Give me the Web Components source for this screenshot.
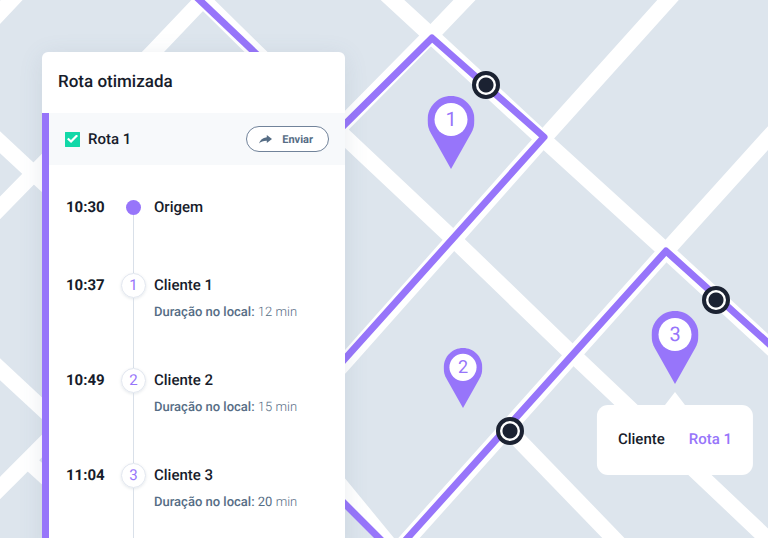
<!DOCTYPE html>
<html lang="pt-BR">
<head>
<meta charset="utf-8">
<meta name="viewport" content="width=device-width, initial-scale=1">
<title>Rota otimizada</title>
<style>
	body {
		margin: 0;
		font-family: Roboto, "Liberation Sans", sans-serif;
		text-rendering: geometricPrecision;
		color: #171c2b;
		--accent: #9775fa;
		--land: #dde5ed;
		--ink: #1b2232;
		--slate: #566d85;
		--line: #e1e6ef;
	}
</style>
</head>
<body>
<route-map>
	<map-stop style="left: 486px; top: 85px"></map-stop>
	<map-stop style="left: 510px; top: 431px"></map-stop>
	<map-stop style="left: 716px; top: 300px"></map-stop>
	<map-pin style="left: 451px; top: 169px">1</map-pin>
	<map-pin small style="left: 463px; top: 408px">2</map-pin>
	<map-pin style="left: 675px; top: 384px">3</map-pin>
	<map-tooltip style="left: 675px; top: 392px">Cliente<a slot="route" href="#rota-1">Rota 1</a></map-tooltip>
	<route-panel slot="panel">
		<span slot="title">Rota otimizada</span>
		<route-header slot="route">Rota 1</route-header>
		<route-step time="10:30" origin>Origem</route-step>
		<route-step time="10:37" number="1" duration="12">Cliente 1</route-step>
		<route-step time="10:49" number="2" duration="15">Cliente 2</route-step>
		<route-step time="11:04" number="3" duration="20" late>Cliente 3</route-step>
	</route-panel>
</route-map>
<script>
// Small helper: every element here only needs an open root with its markup.
function render(el, html) {
	let shadow = el.attachShadow({mode: "open"});
	shadow.innerHTML = html;
	return shadow;
}

// The street canvas. Pins and stops are placed on it, the panel lies over it.
class RouteMap extends HTMLElement {
	connectedCallback() {
		render(this, `
			<style>
				:host {
					display: flex;
					position: relative;
					min-height: 100vh;
					overflow: hidden;
					box-sizing: border-box;
					padding: 52px 42px 0;
					background: var(--land);
				}
				svg {
					position: absolute;
					left: 0;
					top: 0;
					width: 100%;
					height: 100%;
					overflow: visible;
				}
				.roads {
					fill: none;
					stroke: #fff;
					stroke-width: 16;
				}
				.routes {
					fill: none;
					stroke: var(--accent);
					stroke-width: 7;
					stroke-linejoin: round;
				}
			</style>
			<svg aria-hidden="true">
				<g class="roads">
					<path d="M386 -6L437 41L543 139L666 251L778 354"/>
					<path d="M474 -10L431 35L345 122L250 218"/>
					<path d="M677 -10L543 139L345 362L300 412"/>
					<path d="M778 127L666 251L400 548"/>
					<path d="M193 -10L256 52L345 137L448 234L568 350L776 547"/>
					<path d="M212 -10L153 52L42 165L-10 218"/>
					<path d="M510 431L623 548"/>
					<path d="M-10 133L60 198"/>
					<path d="M21 -10L-10 23"/>
					<path d="M-10 360L60 425"/>
					<path d="M-10 498L60 428"/>
					<path d="M27 460L60 490"/>
				</g>
				<path fill="#fff" d="M325 454L394 538L410 550L395 556L325 486Z"/>
				<g class="routes">
					<path d="M189 -10L270 67"/>
					<path d="M325 144L432 38L544 137L325 381"/>
					<path d="M325 484L394 553L666 251L788 361"/>
				</g>
			</svg>
			<slot></slot>
			<slot name="panel"></slot>
		`);
	}
}

class MapStop extends HTMLElement {
	connectedCallback() {
		render(this, `
			<style>
				:host {
					position: absolute;
					box-sizing: border-box;
					width: 28px;
					height: 28px;
					margin: -14px 0 0 -14px;
					border: 4px solid var(--ink);
					border-radius: 50%;
					background: radial-gradient(circle, var(--ink) 7px, #fff 8px);
				}
			</style>
		`);
	}
}

// left/top give the tip of the pin.
class MapPin extends HTMLElement {
	connectedCallback() {
		render(this, `
			<style>
				:host {
					position: absolute;
					display: grid;
					width: 47px;
					height: 73px;
					transform: translate(-50%, -100%);
					font-size: 20px;
					color: var(--accent);
				}
				:host([small]) {
					width: 39px;
					height: 60px;
					font-size: 18px;
				}
				svg, span {
					grid-area: 1 / 1;
				}
				svg {
					width: 100%;
					height: 100%;
				}
				span {
					height: 64%;
					display: flex;
					align-items: center;
					justify-content: center;
				}
			</style>
			<svg viewBox="0 0 47 73" aria-hidden="true">
				<path fill="#9775fa" d="M23.5 0C36.5 0 47 10.5 47 24C47 29 46 33 43.500 37.500L23.500 73L3.500 37.500C1 33 0 29 0 24C0 10.500 10.500 0 23.500 0Z"/>
				<circle cx="23.500" cy="23.500" r="16.500" fill="#fff"/>
			</svg>
			<span><slot></slot></span>
		`);
	}
}

// left/top give the tip of the arrow.
class MapTooltip extends HTMLElement {
	connectedCallback() {
		render(this, `
			<style>
				:host {
					position: absolute;
					display: flex;
					flex-direction: column;
					align-items: center;
					transform: translate(-50%, 0);
					font-size: 15px;
					font-weight: 500;
					line-height: 20px;
					white-space: nowrap;
				}
				.arrow {
					width: 20px;
					height: 13px;
					background: #fff;
					clip-path: polygon(50% 0, 100% 100%, 0 100%);
				}
				.box {
					display: flex;
					gap: 24px;
					padding: 24px 21px 26px;
					border-radius: 11px;
					background: #fff;
				}
				::slotted(a) {
					color: var(--accent);
					text-decoration: none;
				}
			</style>
			<div class="arrow"></div>
			<div class="box"><span><slot></slot></span><slot name="route"></slot></div>
		`);
	}
}

class RoutePanel extends HTMLElement {
	connectedCallback() {
		render(this, `
			<style>
				:host {
					display: flex;
					flex-direction: column;
					position: relative;
					flex: 0 1 303px;
					border-radius: 6px 6px 0 0;
					background: #fff;
					box-shadow: 0 4px 24px rgba(86, 109, 133, 0.12);
				}
				h1 {
					margin: 0;
					padding: 18px 16px 19px;
					font-size: 17px;
					font-weight: 500;
					line-height: 24px;
				}
				.route {
					flex: 1;
					border-left: 7px solid var(--accent);
				}
				.steps {
					padding: 35px 16px 0 17px;
				}
			</style>
			<h1><slot name="title"></slot></h1>
			<div class="route">
				<slot name="route"></slot>
				<div class="steps"><slot></slot></div>
			</div>
		`);
	}
}

class RouteHeader extends HTMLElement {
	connectedCallback() {
		render(this, `
			<style>
				:host {
					display: flex;
					align-items: center;
					justify-content: space-between;
					padding: 13px 16px;
					background: #f7f9fb;
				}
				label {
					display: flex;
					align-items: center;
					gap: 8px;
					font-size: 15px;
					font-weight: 500;
					cursor: pointer;
				}
				input {
					appearance: none;
					display: grid;
					place-items: center;
					width: 15px;
					height: 15px;
					margin: 0;
					border-radius: 1px;
					background: #fff;
					box-shadow: inset 0 0 0 1px #12d8a8;
				}
				input:checked {
					background: #12d8a8;
				}
				input:checked::before {
					content: "";
					width: 11px;
					height: 9px;
					background: #fff;
					clip-path: polygon(0 52%, 14% 36%, 36% 62%, 86% 0, 100% 16%, 37% 94%);
				}
				button {
					display: flex;
					align-items: center;
					gap: 10px;
					height: 26px;
					padding: 0 15px 0 12px;
					border: 1px solid #71839a;
					border-radius: 13px;
					background: #fff;
					color: var(--slate);
					font: 700 11px Roboto, "Liberation Sans", sans-serif;
					text-rendering: inherit;
					cursor: pointer;
				}
			</style>
			<label><input type="checkbox" checked><slot></slot></label>
			<button type="button">
				<svg width="13" height="9" viewBox="0 0 13 9" aria-hidden="true">
					<path fill="currentColor" d="M7.800 0L13 4L7.800 8V5.800C4.500 5.700 2 6.700 0 8.500C1 5 3.500 2.600 7.800 2.200Z"/>
				</svg>
				Enviar
			</button>
		`);
	}
}

class RouteStep extends HTMLElement {
	// time: shown on the left.
	// number: stop number inside the marker, absent for the origin.
	// duration: minutes spent at the client.

	connectedCallback() {
		let number = this.getAttribute("number") || "";
		let duration = this.getAttribute("duration");
		render(this, `
			<style>
				:host {
					display: grid;
					grid-template-columns: 55px 25px 1fr;
					min-height: 95px;
					font-size: 15px;
					font-weight: 500;
					line-height: 25px;
				}
				:host([origin]) {
					min-height: 73px;
					line-height: 15px;
				}
				time {
					font-weight: 700;
				}
				.track {
					display: flex;
					flex-direction: column;
					align-items: center;
				}
				.marker {
					box-sizing: border-box;
					width: 25px;
					height: 25px;
					border: 1px solid var(--line);
					border-radius: 50%;
					box-shadow: 0 1px 3px rgba(86, 109, 133, 0.16);
					color: var(--accent);
					font-size: 15px;
					font-weight: 400;
					line-height: 23px;
					text-align: center;
				}
				:host([origin]) .marker {
					width: 15px;
					height: 15px;
					border: 0;
					background: var(--accent);
					box-shadow: none;
				}
				.line {
					flex: 1;
					width: 1px;
					background: #d9e0e9;
				}
				.info {
					padding-left: 8px;
				}
				p {
					margin: 3px 0 0;
					font-size: 13px;
					line-height: 24px;
					color: var(--slate);
				}
				.value, .unit {
					font-weight: 300;
				}
				:host([late]) .value {
					font-weight: 400;
				}
			</style>
			<time>${this.getAttribute("time")}</time>
			<div class="track"><div class="marker">${number}</div><div class="line"></div></div>
			<div class="info">
				<slot></slot>
				${duration ? `<p>Duração no local: <span class="value">${duration}</span> <span class="unit">min</span></p>` : ""}
			</div>
		`);
	}
}

customElements.define("route-map", RouteMap);
customElements.define("map-stop", MapStop);
customElements.define("map-pin", MapPin);
customElements.define("map-tooltip", MapTooltip);
customElements.define("route-panel", RoutePanel);
customElements.define("route-header", RouteHeader);
customElements.define("route-step", RouteStep);
</script>
</body>
</html>
